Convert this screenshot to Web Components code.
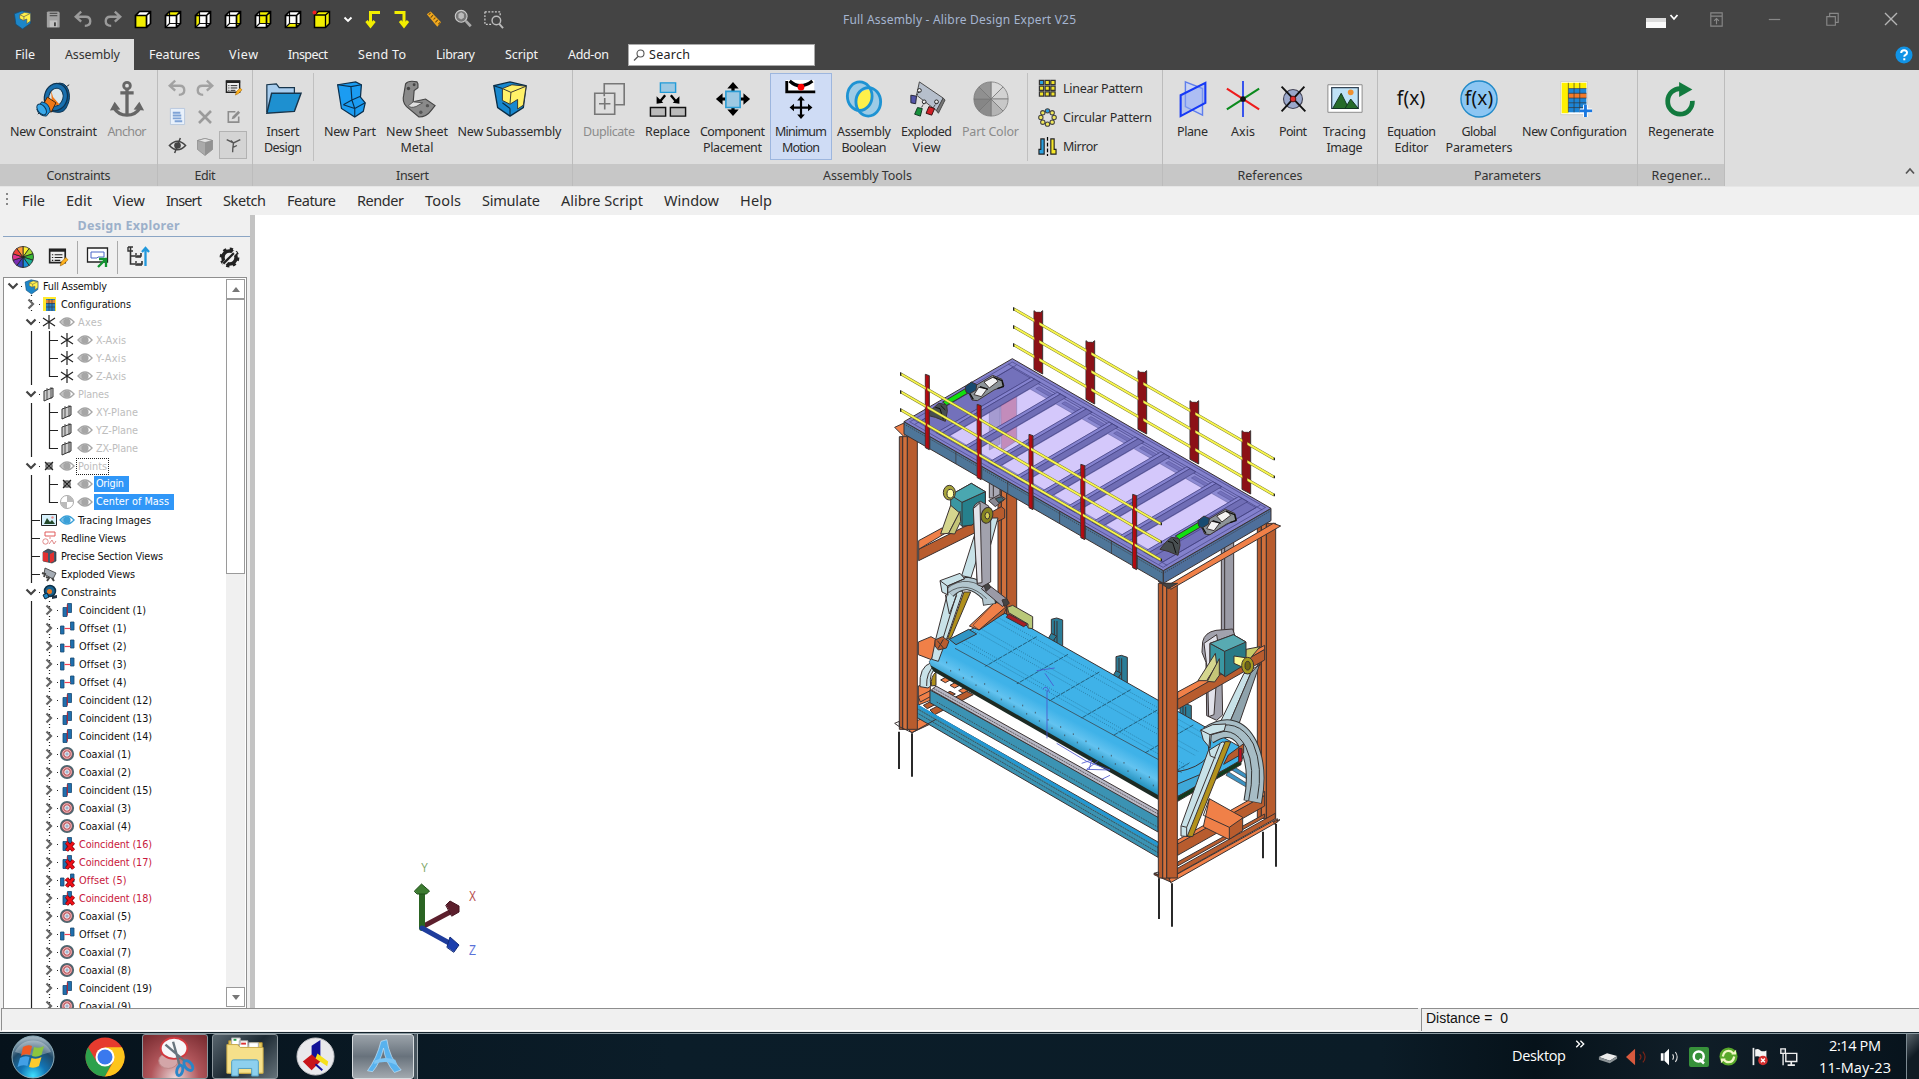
<!DOCTYPE html>
<html lang="en">
<head>
<meta charset="utf-8">
<title>Full Assembly - Alibre Design Expert V25</title>
<style>
html,body{margin:0;padding:0;width:1919px;height:1079px;overflow:hidden;background:#fff}
body{font-family:"Noto Sans","Open Sans",sans-serif;font-size:13px;color:#222}
</style>
</head>
<body>
<cad-app></cad-app>
<script>
const Y='#f2ee00';
const cube=f=>`<path d="M2.5 7.5l4-4h11v12l-4 4h-11z" fill="#fff"/>${f}<path d="M6.500 3.500v12h11M2.500 19.500l4-4" fill="none" stroke="#111" stroke-width="1.200"/><path d="M2.500 7.500h11v12h-11zM2.500 7.500l4-4h11v12l-4 4M13.500 7.500l4-4" fill="none" stroke="#000" stroke-width="1.700"/>`;
const solid=`<path d="M2.500 7.500l4-4h11v12l-4 4h-11z" fill="#fff"/><path d="M2.500 7.500h11v12h-11z" fill="${Y}"/><path d="M2.500 7.500h11v12h-11zM2.500 7.500l4-4h11v12l-4 4M13.500 7.500l4-4" fill="none" stroke="#000" stroke-width="1.700"/>`;
const eye=c=>`<path d="M2 9q7-8 14 0q-7 8-14 0z" fill="#fff" stroke="${c}" stroke-width="1.4"/><circle cx="9" cy="9" r="3.6" fill="${c}"/><path d="M2.5 9l4-3v6z" fill="${c}" opacity=".7"/>`;
const coin='<path d="M5 6.500h4v9h-4z" fill="#1f6fae" stroke="#174a72" stroke-width=".8"/><path d="M9.500 2.500h4v9h-4z" fill="#1f6fae" stroke="#174a72" stroke-width=".8"/><path d="M9.300 3.500v11" stroke="#c02030" stroke-width="1"/>';
const offs='<path d="M2.500 7h3.500v8h-3.500zM12.500 3h3.500v8h-3.500z" fill="#1f6fae" stroke="#174a72" stroke-width=".8"/><path d="M6.500 9.500h6" stroke="#f04050" stroke-width="1.200"/>';
const bad='<path d="M8.500 7.500l7 8M15.500 7.500l-7 8" stroke="#7a0008" stroke-width="4"/><path d="M8.500 7.500l7 8M15.500 7.500l-7 8" stroke="#f01018" stroke-width="2.600"/>';
const wheel=(cs,r,c,st)=>cs.map((k,i)=>{const n=cs.length,a=i*2*Math.PI/n-Math.PI/2,b=a+2*Math.PI/n;return `<path d="M${c} ${c}L${c+r*Math.cos(a)} ${c+r*Math.sin(a)}A${r} ${r} 0 0 1 ${c+r*Math.cos(b)} ${c+r*Math.sin(b)}z" fill="${k}" stroke="${st}" stroke-width=".8"/>`}).join('');
const logo='<path d="M1.500 4l8-3 9 2v11l-8.500 6l-7-5z" fill="#1d86c8" stroke="#124e78" stroke-width=".8"/><path d="M7 5l5-2.500 6.500 1v8l-4 3v-5l-3.500 1.500-4-2z" fill="#fff04a" stroke="#555" stroke-width=".7"/><path d="M7 5l4.500 2 7-3.500M11.500 7v4" stroke="#555" stroke-width=".7" fill="none"/>';
const undo='<path d="M9 3L3 8.500l6 5.500M4 8.500h10q5 0 5 5q0 5-6 5" fill="none" stroke="currentColor" stroke-width="2.600"/>';
const arrow4='<path d="M-13 0H13M0-13V13" stroke="#000" stroke-width="3.400"/><path d="M-18 0l7-6v12zM18 0l-7-6v12zM0-18l-6 7h12zM0 18l-6-7h12z"/>';
// name: [view box size, drawing]
const ICONS={
logo:[20,logo],
save:[20,'<path d="M4 1.500h11q1.500 0 1.500 2v14q0 1-1.500 1h-11q-1 0-1-1v-15z" fill="#a2a2a2"/><path d="M6 3.500h8M6 6h8" stroke="#555" stroke-width="1.300"/><path d="M6 11h8v7h-8z" fill="#c2c2c2"/><path d="M10.500 13h2v4h-2z" fill="#444"/>'],
undo:[22,undo],redo:[22,`<g transform="translate(22 0) scale(-1 1)">${undo}</g>`],
cfront:[20,solid],
ctop:[20,cube(`<path d="M2.500 7.500l4-4h11l-4 4z" fill="${Y}"/>`)],
cleft:[20,cube(`<path d="M2.500 7.500l4-4v12l-4 4z" fill="${Y}"/>`)],
cright:[20,cube(`<path d="M13.500 7.500l4-4v12l-4 4z" fill="${Y}"/>`)],
cback:[20,cube(`<path d="M6.500 3.500h11v12h-11z" fill="${Y}"/>`)],
cbottom:[20,cube(`<path d="M2.500 19.500l4-4h11l-4 4z" fill="${Y}"/>`)],
ciso:[20,`<path d="M2.500 7l4-3.500h11v12l-4 4h-11z" fill="${Y}" stroke="#000" stroke-width="1.500"/><path d="M2.500 7h11l4-3.500M13.500 7v12.500" fill="none" stroke="#000" stroke-width="1.300"/><circle cx="2.500" cy="4.500" r="2" fill="#f02020"/>`],
chev:[10,'<path d="M1.500 3.500l3.500 3.500 3.500-3.500" fill="none" stroke="currentColor" stroke-width="1.900"/>'],
yl:[20,`<path d="M17 3.500H7.500V15M3.500 12l4 5 4-5" fill="none" stroke="${Y}" stroke-width="3"/>`],
yr:[20,`<path d="M2.500 3.500H12V15M8 12l4 5 4-5" fill="none" stroke="${Y}" stroke-width="3"/>`],
ruler:[20,'<path d="M3 4.500l4-3L18 13l-4 4.500z" fill="#f2a91e"/><path d="M7 3l-2 2M9.500 5.500L7 8M12 8l-2 2M14.500 10.500L12 13M17 13l-2 2" stroke="#6b4a10" stroke-width="1.100"/>'],
mag:[22,'<circle cx="9" cy="8" r="6.500" fill="#777" stroke="#ccc" stroke-width="1.200"/><path d="M9 3.500l3 2v4l-3 2-3-2v-4z" fill="#bbb"/><path d="M14 13l5.500 6" stroke="#aaa" stroke-width="3"/>'],
region:[22,'<path d="M2 3h16v5M2 3v13h7" fill="none" stroke="#ccc" stroke-width="1.300" stroke-dasharray="2 1.500"/><circle cx="14" cy="12" r="4.500" fill="none" stroke="#bbb" stroke-width="1.500"/><path d="M17 15.500l4 4.500" stroke="#bbb" stroke-width="2"/>'],
constraint:[40,'<path d="M36 5l-6 4M3 36l3-3" stroke="#222"/><path d="M22 4q9-3 13 6 3 9-1 17-3 8-11 7l-6-1z" fill="#0d588f" stroke="#0e3350"/><ellipse cx="22" cy="18" rx="12" ry="14.500" fill="#186fae" stroke="#0e3350" stroke-width="1.300" transform="rotate(15 22 18)"/><ellipse cx="22" cy="18" rx="7.500" ry="9.500" fill="#d9e6ec" stroke="#0e3350" transform="rotate(15 22 18)"/><path d="M17 11l2 7 7 8-8 1z" fill="#f07818"/><path d="M13 18l9 6-5 10-9-7z" fill="#f07818" stroke="#44260a"/><path d="M7 23q8 1 9 10l-4 5q-8 0-10-7z" fill="#1c91dc" stroke="#0e3350"/><ellipse cx="7" cy="31" rx="4" ry="6.500" fill="#3aa9ea" stroke="#0e3350" transform="rotate(-38 7 31)"/>'],
anchor:[40,'<g fill="none" stroke="#666" stroke-width="3"><circle cx="20" cy="6" r="3.500"/><path d="M20 10v26M13 13.500h14" stroke-width="3.500"/><path d="M6 29q5 8 14 8t14-8" stroke-width="3.500"/></g><path d="M2 32l5-9 6 8zM38 32l-5-9-6 8z" fill="#666"/>'],
props:[18,'<path d="M1.500 2h14v12h-14z" fill="#eee" stroke="#222" stroke-width="1.500"/><path d="M1 3h15" stroke="#222" stroke-width="2.500"/><path d="M6 7h7M6 9.500h7M6 12h5M3.500 7h1.200M3.500 9.500h1.200M3.500 12h1.200" stroke="#222"/><path d="M11 17l1-3.500 4-4 2 2-4 4z" fill="#ffb21c" stroke="#a4690b" stroke-width=".6"/>'],
bluelist:[18,'<path d="M1.500 .5h15v17h-15z" fill="#e9f1fb" stroke="#b9c9de"/><path d="M4 5h8M4 8h9M4 11h9M6 14h8" stroke="#7fa3d6" stroke-width="2"/>'],
xx:[18,'<path d="M3 3l12 12M15 3L3 15" stroke="#9b9b9b" stroke-width="2.600"/>'],
editbox:[18,'<path d="M11 4H3.500v11h11V9" fill="none" stroke="#8d8d8d" stroke-width="1.700"/><path d="M7 12l1-3 6-6 2 2-6 6z" fill="#8d8d8d"/>'],
noeye:[20,'<path d="M1.500 10q8.500-9 17 0-8.500 9-17 0z" fill="none" stroke="#444" stroke-width="1.600"/><circle cx="10" cy="10" r="3.500" fill="#444"/><path d="M7 18L13 2" stroke="#444" stroke-width="1.600"/>'],
shade:[18,'<path d="M1.500 3.500l7.500-2 7.500 2v9l-7.500 6-7.500-6z" fill="#aaa" stroke="#888" stroke-width=".7"/><path d="M9 5.500l7.500-2v9l-7.500 6z" fill="#929292"/><path d="M1.500 3.500l7.500-2 7.500 2-7.500 2z" fill="#e6e6e6" stroke="#888" stroke-width=".7"/>'],
tri:[20,'<path d="M2 3l8 4 8-4M10 7q-1 6-1 11M7 4l3 3M10 12l4-2" fill="none" stroke="#555" stroke-width="1.600"/>'],
folder:[40,'<path d="M3 34V5l10-1 3 4h16v6" fill="#a8cdee" stroke="#17354c" stroke-width="1.300"/><path d="M3 35l5-21h31l-7 19z" fill="#1e90d0" stroke="#17354c" stroke-width="1.500"/>'],
part:[40,'<path d="M7 5L26 2l6 3-1 13 5 6-2 9-9 6-14-9z" fill="#1b9cf2" stroke="#0a2f4d" stroke-width="1.300"/><path d="M7 5l14 2 11-2M21 7l1 14-9 5M22 21l9-4M22 21l3 9v9M25 30l11-6M13 26l12 4" fill="none" stroke="#0a2f4d" stroke-width="1.200"/>'],
sheet:[40,'<path d="M8 4q3-4 12-2l1 2v4l-4 3-1 12 13-3 10 7-4 5q-5 7-13 7L9 28q-5-5-3-12z" fill="#8a8a8a" stroke="#444" stroke-width="1.200"/><path d="M11 27q2 3 8 1l7-4-10-1z" fill="#dedede" stroke="#555"/><circle cx="11" cy="9" r="1.800" fill="#444"/><circle cx="17" cy="5" r="1.500" fill="#444"/><circle cx="31" cy="27" r="1.800" fill="#555"/><circle cx="24" cy="34" r="1.800" fill="#555"/>'],
subasm:[40,'<path d="M3 6l17-4 17 4-3 23-14 9-13-9z" fill="#1788cf" stroke="#092c45" stroke-width="1.400"/><path d="M3 6l9 3M20 30v8M12 24l8 6" fill="none" stroke="#092c45" stroke-width="1.200"/><path d="M12 9l10-4 15 1.500-3 20-6 4v-10l-8 5-8-4z" fill="#fff168" stroke="#333"/><path d="M12 9l9 4 16-6.500M21 13l-1 12" stroke="#333" fill="none"/>'],
dup:[40,'<path d="M15 17V4h21v22H26" fill="none" stroke="#777" stroke-width="1.700"/><path d="M5 14h21v22H5zM15.500 19v12M9.500 25h12" fill="none" stroke="#777" stroke-width="1.700"/>'],
replace:[40,'<path d="M12 3h16v10H12z" fill="#9cc8e2" stroke="#219bd8" stroke-width="1.500"/><path d="M1.500 29h16v9h-16zM22.500 29h16v9h-16z" fill="#bbb" stroke="#111" stroke-width="1.500"/><path d="M17 16l-5 6M23 16l5 6" stroke="#000" stroke-width="2.500"/><path d="M8 25v-8l7 7zM32 25v-8l-7 7z"/>'],
place:[40,`<g transform="translate(20 20)">${arrow4}</g><path d="M12.500 12h15v17h-15z" fill="#9dc9e3" stroke="#2b9cd4" stroke-width="1.700"/>`],
motion:[40,`<path d="M4 0h30v14H4z" fill="#fff"/><path d="M5 1v11.500h30" fill="none" stroke="#000" stroke-width="3"/><path d="M8 1q11 10 24 0" fill="none" stroke="#000" stroke-width="3.500"/><circle cx="20" cy="7.500" r="3.500" fill="red"/><g transform="translate(20 29) scale(.67)">${arrow4}</g>`],
bool:[40,'<ellipse cx="15.500" cy="17" rx="13" ry="15" fill="#9dcbe6"/><ellipse cx="24.500" cy="23" rx="13" ry="15" fill="#9dcbe6"/><path d="M11 27Q11 10 27 10 32 22 24 31 16 33 11 27z" fill="#fff04a"/><ellipse cx="15.500" cy="17" rx="13" ry="15" fill="none" stroke="#1e93d3" stroke-width="3"/><ellipse cx="24.500" cy="23" rx="13" ry="15" fill="none" stroke="#1e93d3" stroke-width="3"/>'],
explode:[40,'<path d="M12 2l25 17-6 14-22-17z" fill="#b6bfcc" stroke="#444"/><path d="M37 19l2 2-7 14-2-3z" fill="#777" stroke="#444"/><g fill="#eee" stroke="#222"><circle cx="12" cy="11" r="2"/><circle cx="17" cy="23" r="2"/><circle cx="30" cy="23" r="2"/></g><path d="M12 12l-5 7M17 24l-5 9M30 24l-6 9" stroke="#222" stroke-dasharray="2 1"/><path d="M3 16l6 1-1 8-5-1z" fill="#5355a8" stroke="#223"/><path d="M10 29l5 1-2 8-6-2z" fill="#17913c" stroke="#132"/><path d="M22 28l6 2-3 7-6-2z" fill="#cf1f25" stroke="#311"/>'],
color:[40,wheel(['#dadada','#d2d2d2','#c8c8c8','#b4b4b4','#8c8c8c','#868686','#909090','#969696'],18,20,'#777')],
linear:[20,(()=>{let s='';for(let i=0;i<3;i++)for(let j=0;j<3;j++)s+=`<path d="M${1.5+i*6} ${1.500+j*6}h4.500v4.500h-4.500z" fill="${i+j?'#f0e22a':'#2aa0e0'}" stroke="#333" stroke-width="1.300"/>`;return s})()],
circular:[20,(()=>{let s='<circle cx="10" cy="10" r="6.500" fill="none" stroke="#444"/>';for(let i=0;i<8;i++){const a=i*Math.PI/4-Math.PI/2;s+=`<circle cx="${10+7*Math.cos(a)}" cy="${10+7*Math.sin(a)}" r="2.300" fill="${i?'#f0e75a':'#2aa0e0'}" stroke="#444" stroke-width="1.100"/>`}return s})()],
mirror:[20,'<path d="M6.500 2v16H1v-5h2V2z" fill="#2aa0e0" stroke="#222" stroke-width="1.200"/><path d="M13.500 2v16H19v-5h-2V2z" fill="#f5e62a" stroke="#222" stroke-width="1.200"/><path d="M10 0v20" stroke="#000" stroke-width="1.300" stroke-dasharray="4 2"/>'],
plane:[40,'<path d="M12 2l18 7v28L12 28z" fill="#c7d4f8" stroke="#4067f0" stroke-width="1.500" opacity=".8"/><path d="M7 16L33 3v21L7 38z" fill="#8fa8f4" fill-opacity=".5" stroke="#1639f5" stroke-width="2.200"/>'],
axis:[40,'<path d="M3 31L37 9" stroke="#0b8a1d" stroke-width="2.200"/><path d="M3 9l34 22" stroke="#ee1c1c" stroke-width="2.200"/><path d="M20 1v38" stroke="#1c3cf0" stroke-width="1.800"/><circle cx="20" cy="20" r="3" fill="#111"/>'],
point:[40,'<circle cx="20" cy="20" r="10" fill="#9aa8cc" stroke="#445" stroke-width="1.200"/><path d="M8 7l25 26M32 7L8 33" stroke="#111" stroke-width="2"/><circle cx="20" cy="20" r="3" fill="#e03030" stroke="#511"/>'],
image:[40,'<path d="M2 5h36v29H2z" fill="#fff" stroke="#888"/><path d="M6 8h28v22H6z" fill="#bfe2f7" stroke="#345" stroke-width="1.300"/><circle cx="26" cy="13" r="3" fill="#f09030"/><path d="M7 30l9-16 8 16z" fill="#256b2a" stroke="#132"/><path d="M20 30l6-10 8 10z" fill="#256b2a" stroke="#132"/>'],
fx:[40,'<text x="19" y="26" text-anchor="middle" font-family="Noto Sans" font-size="20" fill="#111" textLength="30">f(x)</text>'],
gfx:[40,'<circle cx="20" cy="20" r="19" fill="#8cc6f3" stroke="#218ac9" stroke-width="1.500"/><text x="20" y="26" text-anchor="middle" font-family="Noto Sans" font-size="20" fill="#111" textLength="30">f(x)</text>'],
config:[40,'<path d="M5 1.500h28v35H5z" fill="#fff" stroke="#ccc"/><path d="M6 3h26v6H6zM6 3h7v32H6z" fill="#fff000"/><path d="M13 9h19v25H13z" fill="#1c84d6"/><path d="M13 14h19v5H13z" fill="#f37a2b"/><path d="M13 9v25M19 3v31M25 3v31M13 3v6M13 9h19M13 14h19M13 19h19M13 24h19M13 29h19" stroke="#333" stroke-width=".7"/><path d="M31 26v13M25 32.500h13" stroke="#fff" stroke-width="5"/><path d="M31 26v13M25 32.500h13" stroke="#1a78e0" stroke-width="3"/>'],
regen:[40,'<path d="M20 9A13 13.500 0 1 0 32 22" fill="none" stroke="#127a3e" stroke-width="5"/><path d="M18 2l14 8-14 8z" fill="#127a3e"/>'],
wheel:[24,wheel(['#ffef30','#a4d830','#38b838','#1cae94','#1890d8','#3544ba','#7a2cb4','#e0348e','#f24238','#ff9d3c'],10.5,12,'#222')],
viewport:[24,'<path d="M1.500 3h20v14h-20z" fill="#fff" stroke="#222" stroke-width="1.300"/><path d="M5 7h13v5h-6l-1 1H5z" fill="none" stroke="#4b66c8"/><path d="M12 22l7-7M13 14h7v8" fill="none" stroke="#129430" stroke-width="2.300"/>'],
tree:[24,'<path d="M2 2h5M4.500 2v17h5M4.500 11h5M11 11h4v-3M11 19h5v-3" fill="none" stroke="#333" stroke-width="1.600"/><path d="M2 2v4h5M10 8v4h5M10 16v4h6" fill="none" stroke="#333" stroke-width="1.400"/><path d="M19.500 21V3M16 7l3.500-4 3.500 4" fill="none" stroke="#2198dc" stroke-width="2.300"/>'],
gear:[24,'<circle cx="12" cy="12" r="7.500" fill="none" stroke="#222" stroke-width="4"/><circle cx="12" cy="12" r="9.800" fill="none" stroke="#222" stroke-width="3" stroke-dasharray="3.700 4"/><path d="M5 20L19 5" stroke="#efefef" stroke-width="4.500"/><path d="M5 19L17 7" stroke="#222" stroke-width="2.500"/>'],
cfg:[18,'<path d="M3 2h13v14H3z" fill="#ffe92e"/><path d="M6 4h9v12H6z" fill="#2d7fc0"/><path d="M6 5h9v3H6z" fill="#e0873a"/><path d="M9 4v12M12 4v12M6 8.500h9M6 12h9" stroke="#333" stroke-width=".6"/>'],
ax:[18,'<path d="M9 2v14M3 5l12 8M15 5L3 13" stroke="#222" stroke-width="1.200"/>'],
pl:[18,'<path d="M4 6l9-3v9l-9 4z" fill="#ccc" stroke="#333"/><path d="M7 3v12M11 2v12" fill="none" stroke="#444" stroke-width=".9"/>'],
pt:[18,'<path d="M5 5h8v8H5z" fill="#b0b0b0"/><path d="M5 5l8 8M13 5l-8 8" stroke="#222" stroke-width="1.100"/><circle cx="9" cy="9" r="3" fill="none" stroke="#444" stroke-width=".8"/>'],
com:[18,'<circle cx="9" cy="9" r="6.500" fill="#fff" stroke="#aaa"/><path d="M9 2.500A6.500 6.500 0 0 1 15.500 9H9zM9 9v6.500A6.500 6.500 0 0 1 2.500 9z" fill="#bbb"/>'],
eye:[18,eye('#a6a6a6')],eyeb:[18,eye('#3aa0d8')],
img:[18,'<path d="M1.500 3.500h15v11h-15z" fill="#d7f1fc" stroke="#222"/><path d="M4 13l3-6 3 4 2-2 3 4z" fill="#23482a"/><circle cx="12.500" cy="6.500" r="1.200" fill="#e88"/>'],
red:[18,'<path d="M5 3h10v4H5z" fill="none" stroke="#e05a5a"/><circle cx="5.500" cy="12.500" r="2.700" fill="none" stroke="#e08a8a"/><path d="M9 15l3-4 2 4 2-3M10 8v2" fill="none" stroke="#e08a8a"/>'],
sec:[18,'<path d="M3 5l5-3 8 3v9l-4 2-9-2z" fill="#40586a" stroke="#222" stroke-width=".6"/><path d="M3 5l5 1v9l-5-1zM10 7l4-2v9l-4 2z" fill="#e03030"/>'],
exp:[18,'<path d="M5 3l11 5-3 6-9-5z" fill="#a5acb4" stroke="#333" stroke-width=".8"/><path d="M2 8l3 1-1 3M6 12l3 1-2 3M12 13l2 3" stroke="#444" stroke-width="2" fill="none"/>'],
con:[18,'<circle cx="10" cy="8" r="5.500" fill="#19628f" stroke="#0c3048" stroke-width="1.500"/><circle cx="9.500" cy="8.500" r="2.500" fill="#e87722"/><path d="M3 12l4-2 2 4-4 2z" fill="#2188c5" stroke="#123"/><path d="M12 13l5-1v3l-5 1z" fill="#234"/>'],
coin:[18,coin],offs:[18,offs],coinx:[18,coin+bad],offsx:[18,offs+bad],
coax:[18,'<circle cx="9" cy="9" r="6.200" fill="#c05c62" stroke="#4d6670" stroke-width="1.800"/><circle cx="9" cy="9" r="4.300" fill="none" stroke="#f0c8c8" stroke-width=".9"/><circle cx="9" cy="9" r="2.200" fill="#9fb2cc" stroke="#fff" stroke-width=".9"/>'],
down:[18,'<path d="M4.500 6.500L9 11l4.500-4.500" fill="none" stroke="#444" stroke-width="2.200"/>'],
right:[18,'<path d="M6.500 4.500L11 9l-4.500 4.500" fill="none" stroke="#666" stroke-width="2.200"/>'],
ribbonopt:[20,'<path d="M4 3h12v14H4zM4 6.500h12M10 15V9M7.500 11.500L10 9l2.500 2.500" fill="none" stroke="#888" stroke-width="1.200"/>'],
min:[20,'<path d="M4 10h12" stroke="#888" stroke-width="1.300"/>'],
max:[20,'<path d="M4 7h9v9H4zM7 7V3.500h9V13h-3" fill="none" stroke="#888" stroke-width="1.200"/>'],
close:[20,'<path d="M4 4l12 12M16 4L4 16" stroke="#b5b5b5" stroke-width="1.400"/>'],
skin:[30,'<path d="M0 14h20v10H0z" fill="#dcdcdc"/><path d="M0 18h20v6H0z" fill="#fafafa"/><path d="M24.500 11l3.500 4 3.500-4" fill="none" stroke="#fff" stroke-width="1.800"/>'],
help:[18,'<circle cx="9" cy="9" r="8.500" fill="#1193e6"/><path d="M6.200 7q0-2.700 2.900-2.700T12 6.800q0 1.500-1.800 2.300-.9.500-.9 1.700M9.300 12.300v2" fill="none" stroke="#fff" stroke-width="2"/>'],
up:[12,'<path d="M2 8.500L6 4l4 4.500" fill="none" stroke="#555" stroke-width="1.700"/>'],
search:[12,'<circle cx="7.500" cy="4.500" r="3.500" fill="none" stroke="#555" stroke-width="1.100"/><path d="M5 7.500L1 11.500" stroke="#555" stroke-width="1.300"/>'],
start:[44,'<defs><radialGradient id="o" cy=".95" r=".9"><stop offset="0" stop-color="#3fe0ff"/><stop offset=".35" stop-color="#1275b6"/><stop offset=".7" stop-color="#204a68"/><stop offset="1" stop-color="#9cb0bd"/></radialGradient></defs><circle cx="22" cy="22" r="21" fill="url(#o)" stroke="#8daebc"/><path d="M4 17a19 17 0 0 1 36 0q-18 7-36 0z" fill="#fff" opacity=".3"/><path d="M12 12q5-3 9-1l-2 9q-5-2-9 1z" fill="#ee5a24"/><path d="M23 12q5 2 10-1l-2.500 9q-5 3-9.500 1z" fill="#8cc63e"/><path d="M9 23q5-3 9.500-1l-2 9q-5-2-10 1z" fill="#42a0e6"/><path d="M20.500 23q5 2 10-1l-2.500 9q-5 3-10 1z" fill="#ffcb2e"/>'],
chrome:[40,'<circle cx="20" cy="20" r="19.500" fill="#e63b2e"/><path d="M3.100 10.300A19.500 19.500 0 0 0 20 39.500L28 24 20 20 11.500 24.500z" fill="#2da14c"/><path d="M20 39.500A19.500 19.500 0 0 0 37 10.300H20L28.500 24.500z" fill="#fdc51c"/><circle cx="20" cy="20" r="9.500" fill="#fff"/><circle cx="20" cy="20" r="7.500" fill="#3a79ee"/>'],
snip:[44,'<ellipse cx="15" cy="26" rx="10" ry="8" fill="#d3a6a8" stroke="#b88"/><ellipse cx="21" cy="13" rx="14" ry="11" fill="#f7f7f9" stroke="#d23a3f" stroke-width="2"/><path d="M12 9l20 17M20 6l7 25" stroke="#68757e" stroke-width="2.500"/><g fill="none" stroke="#2a86c8" stroke-width="3"><ellipse cx="27" cy="36" rx="3" ry="5.500" transform="rotate(15 27 36)"/><ellipse cx="36" cy="31" rx="3.500" ry="6" transform="rotate(-40 36 31)"/></g>'],
files:[44,'<path d="M5 5h9v5h14V7h12v32H5z" fill="#e9cb5c" stroke="#b08f30"/><path d="M8 2h9v7H8zM16 5h9v7h-9zM26 7h10v7H26z" fill="#fff" stroke="#aaa"/><path d="M10 4h3" stroke="#2aa050" stroke-width="2"/><path d="M18 8h5" stroke="#d33" stroke-width="2"/><path d="M3 9h11l3 3h24v27H3z" fill="#f6e08a" stroke="#c9a945"/><path d="M8 42V27q0-2 2-2h24q2 0 2 2v15h-7v-8H15v8z" fill="#8dd0ee" stroke="#4f9cc0"/>'],
sketch:[40,'<circle cx="20" cy="20" r="19" fill="#e9e9ec" stroke="#c4c4c8"/><path d="M16 9l9-6v17l-9 5z" fill="#111197"/><path d="M7 25l9-7 9 7-9 9z" fill="#c8141a"/><path d="M22 17l11 8-1 5-12-8z" fill="#f6e01c"/><path d="M20 28l7 6" stroke="#111197" stroke-width="2"/>'],
alibre:[44,'<path d="M3 39Q14 24 19 4l7-2q3 22 17 36l-8 3Q24 29 22 12 18 30 9 40z" fill="#58b2ee" stroke="#c8e6fa" stroke-width=".8"/><path d="M11 27q12-6 25-1l3 7q-13-8-28-2z" fill="#7dc6f5"/>'],
drive:[22,'<path d="M1 11l9-4 11 3-8 5z" fill="#ececec"/><path d="M1 11v3l12 4v-3zM13 15l8-5v3l-8 5z" fill="#8c9396"/>'],
spkr:[22,'<path d="M0 11L10 2v18z" fill="#d85a3e"/><path d="M15 8q3 3 0 6M18.500 5q5 6 0 12" stroke="#7d2417" fill="none" stroke-width="1.300"/>'],
spkw:[22,'<path d="M2 7h3v8H2zM6 7l5-5v18l-5-5z" fill="#fff"/><path d="M15 8q2 3 0 6M18 5.500q4 5.500 0 11" stroke="#ddd" fill="none" stroke-width="1.200"/>'],
q:[20,'<rect width="20" height="20" rx="2" fill="#37913a"/><circle cx="9.700" cy="9.500" r="5" fill="none" stroke="#fff" stroke-width="2.500"/><path d="M10.500 12l4.500 4.500" stroke="#fff" stroke-width="2.500"/>'],
sync:[20,'<circle cx="10" cy="10" r="9.500" fill="#58a82a"/><path d="M4 10q1-6 6-6 3 0 5 3M16 10q-1 6-6 6-3 0-5-3" stroke="#eff7c2" stroke-width="2.400" fill="none"/><path d="M13 8h5V3zM7 12H2v5z" fill="#eff7c2"/>'],
flag:[22,'<path d="M4 1v20" stroke="#eee" stroke-width="2"/><path d="M6 3q4-2 6 1 3 2 7 0v9q-4 1-7-1-2-2-6-1z" fill="#f4f4f4"/><circle cx="15" cy="15.500" r="5.500" fill="#d42f2f"/><path d="M12.800 13.300l4.400 4.400M17.200 13.300l-4.400 4.400" stroke="#fff" stroke-width="1.600"/>'],
net:[22,'<path d="M7.500 7h12v9h-12z" fill="#17212a" stroke="#eee" stroke-width="1.600"/><path d="M13.500 16v3M9.500 20h8" stroke="#eee" stroke-width="1.800"/><path d="M2 2h5v5H2zM4.500 7v13" fill="#26313a" stroke="#eee" stroke-width="1.500"/>'],
dbl:[12,'<path d="M1.500 2l4 4-4 4M6.500 2l4 4-4 4" fill="none" stroke="#fff" stroke-width="1.600"/>']
};
const def=(n,c)=>customElements.define(n,c);
class Base extends HTMLElement{
  constructor(){super();this.attachShadow({mode:'open'})}
  connectedCallback(){this.shadowRoot.innerHTML=this.render();this.after&&this.after()}
  a(n,d=''){return this.getAttribute(n)??d}
}
def('ui-icon',class extends Base{render(){
  const [v,d]=ICONS[this.a('name')],s=this.a('size',v);
  return `<style>:host{display:block;flex:none;width:${s}px;height:${s}px}svg{display:block;overflow:visible}</style><svg width="${s}" height="${s}" viewBox="0 0 ${v} ${v}">${d}</svg>`}});
// Label whose tracking is adjusted to occupy a given advance width.
def('fit-text',class extends Base{render(){
  return `<style>:host{display:block;flex:none;white-space:pre;width:${this.a('w')}px}span{display:inline-block}</style><span>${this.a('t')}</span>`}
  after(){const s=this.shadowRoot.querySelector('span'),w=+this.a('w'),t=this.a('t');
    if(w&&t.length>1)s.style.letterSpacing=(w-s.getBoundingClientRect().width)/(t.length-1)+'px'}});
def('title-bar',class extends Base{render(){
  const q=[['logo',19,22],['save',19,53],['undo',20,83],['redo',20,113],['cfront',20,143],['ctop',20,173],['cleft',20,203],['cright',20,233],['cback',20,263],['cbottom',20,293],['ciso',20,322],['chev',10,348],['yl',20,373],['yr',20,402],['ruler',19,433],['mag',20,463],['region',21,493]];
  let x=0,h='';for(const[n,s,c]of q){h+=`<ui-icon name="${n}" size="${s}" style="margin-left:${c-s/2-x}px;margin-top:${n[0]=='c'&&n!='chev'?-3:-1}px"></ui-icon>`;x=c+s/2}
  return `<style>:host{display:flex;height:39px;background:#444;color:#9b9b9b;align-items:center}
  .q{display:flex;align-items:center;width:843px}.t{color:#a5b5d0;font-size:12px;flex:1}.c{display:flex;align-items:center;gap:39px;padding-right:18px;margin-top:-1px}ui-icon[name=chev]{color:#fff}</style>
  <div class="q">${h}</div><div class="t"><fit-text w="233" t="Full Assembly - Alibre Design Expert V25"></fit-text></div>
  <div class="c"><ui-icon name="skin" size="30" style="margin-right:-8px"></ui-icon><ui-icon name="ribbonopt" size="19"></ui-icon><ui-icon name="min" size="19"></ui-icon><ui-icon name="max" size="19"></ui-icon><ui-icon name="close" size="20"></ui-icon></div>`}});
def('tab-strip',class extends Base{render(){
  const t=[['File',15,20],['Assembly',65,55],['Features',149,51],['View',229,29],['Inspect',288,40],['Send To',358,48],['Library',436,39],['Script',505,33],['Add-on',568,41]];
  let x=0,h='';for(const[n,l,w]of t){if(n=='Assembly'){h+=`<div class="on" style="margin-left:${50-x}px"><fit-text w="55" t="Assembly"></fit-text></div>`;x=134}else{h+=`<fit-text style="margin-left:${l-x}px" w="${w}" t="${n}"></fit-text>`;x=l+w}}
  return `<style>:host{display:flex;height:31px;background:#444;color:#f4f4f4;align-items:center;font-size:12.500px}
  .on{background:#dedede;color:#333;height:31px;width:69px;padding-left:15px;display:flex;align-items:center}
  .s{margin-left:19px;height:22px;background:#fff;border:1px solid #aaa;box-sizing:border-box;display:flex;align-items:center;gap:4px;padding-left:4px;color:#222;width:187px}
  .h{margin-left:auto;margin-right:6px}</style>${h}<div class="s"><ui-icon name="search" size="12"></ui-icon><fit-text w="41" t="Search"></fit-text></div><ui-icon class="h" name="help" size="18"></ui-icon>`}});
// l1/l2: caption lines, w1/w2: their widths
def('rib-button',class extends Base{render(){
  return `<style>:host{display:flex;flex-direction:column;align-items:center;box-sizing:border-box;flex:none;height:87px;width:${this.a('w')}px;padding-top:6px;line-height:16px;color:#2b2b2b;font-size:12.500px;border:1px solid transparent}
  :host([off]){color:#8b8b8b}:host([on]){background:#cfdcf5;border-color:#9db6de}ui-icon{margin-bottom:6px}</style>
  <ui-icon name="${this.a('icon')}" size="38"></ui-icon><fit-text w="${this.a('w1')}" t="${this.a('l1')}"></fit-text>${this.a('l2')?`<fit-text w="${this.a('w2')}" t="${this.a('l2')}"></fit-text>`:''}`}});
def('rib-group',class extends Base{render(){
  return `<style>:host{display:flex;flex-direction:column;box-sizing:border-box;flex:none;width:${this.a('w')}px;height:116px;border-right:1px solid #bcbcbc}
  .b{display:flex;height:94px;box-sizing:border-box;padding:3px 0 0 ${this.a('pad',5)}px}.l{height:22px;background:#c7c7c7;display:flex;align-items:center;justify-content:center;font-size:12.500px;color:#333}</style>
  <div class="b"><slot></slot></div><div class="l"><fit-text w="${this.a('lw')}" t="${this.a('label')}"></fit-text></div>`}});
def('rib-bar',class extends Base{render(){
  const b=(w,icon,l1,w1,l2='',w2=0,x='')=>`<rib-button ${x} w="${w}" icon="${icon}" l1="${l1}" w1="${w1}" l2="${l2}" w2="${w2}"></rib-button>`;
  const row=(i,t,w)=>`<div class="r"><ui-icon name="${i}" size="19"></ui-icon><fit-text w="${w}" t="${t}"></fit-text></div>`;
  return `<style>:host{display:flex;height:116px;background:#dedede;border-bottom:0}
  .g{display:grid;grid-template-columns:repeat(3,28px);grid-auto-rows:29px}.g div{display:flex;align-items:center;justify-content:center;color:#a2a2a2}.g .on{border:1px solid #b2b2b2;box-sizing:border-box;background:#d4d4d4;height:28px}
  .s{width:1px;height:88px;background:#c0c0c0;margin:0 4px 0 3px}.c{padding:1px 0 0 6px}.r{display:flex;align-items:center;height:29px;gap:6px;font-size:12.500px;color:#2b2b2b}
  .x{margin:95px 3px 0 auto}</style>
  <rib-group w="158" label="Constraints" lw="64">${b(97,'constraint','New Constraint',87)}${b(50,'anchor','Anchor',39,'',0,'off')}</rib-group>
  <rib-group w="95" label="Edit" lw="21"><div class="g"><div><ui-icon name="undo" size="20"></ui-icon></div><div><ui-icon name="redo" size="20"></ui-icon></div><div><ui-icon name="props" size="17"></ui-icon></div><div><ui-icon name="bluelist" size="17"></ui-icon></div><div><ui-icon name="xx" size="18"></ui-icon></div><div><ui-icon name="editbox" size="17"></ui-icon></div><div><ui-icon name="noeye" size="19"></ui-icon></div><div><ui-icon name="shade" size="18"></ui-icon></div><div class="on"><ui-icon name="tri" size="17"></ui-icon></div></div></rib-group>
  <rib-group w="320" label="Insert" lw="33" pad="3">${b(54,'folder','Insert',33,'Design',38)}<div class="s"></div>${b(64,'part','New Part',52)}${b(70,'sheet','New Sheet',62,'Metal',33)}${b(115,'subasm','New Subassembly',104)}</rib-group>
  <rib-group w="590" label="Assembly Tools" lw="89">${b(62,'dup','Duplicate',52,'',0,'off')}${b(55,'replace','Replace',45)}${b(75,'place','Component',65,'Placement',59)}${b(62,'motion','Minimum',52,'Motion',38,'on')}${b(64,'bool','Assembly',54,'Boolean',45)}${b(61,'explode','Exploded',51,'View',28)}${b(67,'color','Part Color',57,'',0,'off')}<div class="s"></div><div class="c">${row('linear','Linear Pattern',80)}${row('circular','Circular Pattern',89)}${row('mirror','Mirror',35)}</div></rib-group>
  <rib-group w="215" label="References" lw="65">${b(49,'plane','Plane',31)}${b(52,'axis','Axis',24)}${b(48,'point','Point',28)}${b(55,'image','Tracing',43,'Image',36)}</rib-group>
  <rib-group w="260" label="Parameters" lw="67" pad="3">${b(61,'fx','Equation',49,'Editor',34)}${b(74,'gfx','Global',35,'Parameters',67)}${b(117,'config','New Configuration',105)}</rib-group>
  <rib-group w="87" label="Regener..." lw="59">${b(76,'regen','Regenerate',66)}</rib-group>
  <ui-icon class="x" name="up" size="12"></ui-icon>`}});
def('menu-bar',class extends Base{render(){
  const m=[['File',22,23],['Edit',66,26],['View',113,32],['Insert',166,36],['Sketch',223,43],['Feature',287,49],['Render',357,47],['Tools',425,36],['Simulate',482,58],['Alibre Script',561,82],['Window',664,55],['Help',740,32]];
  let x=8,h='';for(const[n,l,w]of m){h+=`<fit-text style="margin-left:${l-x}px" w="${w}" t="${n}"></fit-text>`;x=l+w}
  return `<style>:host{display:flex;height:29px;background:#f0f0f0;align-items:center;font-size:14.500px;color:#2c2c2c;box-sizing:border-box;border-top:1px solid #e6e6e6;padding-bottom:2px}i{width:2px;height:14px;margin-left:6px;background:repeating-linear-gradient(#888 0 2px,transparent 2px 5px)}</style><i></i>${h}`}});
const ROWS=[[0,'logo','Full Assembly',64,'v'],[1,'cfg','Configurations',70,'>'],[1,'ax','Axes',24,'v','e'],[2,'ax','X-Axis',30,'','e'],[2,'ax','Y-Axis',30,'','e'],[2,'ax','Z-Axis',30,'L','e'],[1,'pl','Planes',31,'v','e'],[2,'pl','XY-Plane',42,'','e'],[2,'pl','YZ-Plane',42,'','e'],[2,'pl','ZX-Plane',42,'L','e'],[1,'pt','Points',29,'v','f'],[2,'pt','Origin',28,'','s'],[2,'com','Center of Mass',73,'L','s'],[1,'img','Tracing Images',73,'','b'],[1,'red','Redline Views',65,''],[1,'sec','Precise Section Views',102,''],[1,'exp','Exploded Views',74,''],[1,'con','Constraints',55,'v']];
for(const c of 'C1 O1 O2 O3 O4 C12 C13 C14 X1 X2 C15 X3 X4 c16 c17 o5 c18 X5 O7 X7 X8 C19 X9'.split(' ')){const k=c[0],K=k.toUpperCase(),n=c.slice(1),nm={C:'Coincident',O:'Offset',X:'Coaxial'}[K];
  ROWS.push([2,{C:'coin',O:'offs',X:'coax'}[K]+(k==K?'':'x'),`${nm} (${n})`,({C:67,O:47.5,X:52}[K])+(n.length>1?6:0),'>',k==K?'':'r'])}
def('tree-row',class extends Base{render(){
  const [l,ic,t,w,k,f='']=ROWS[+this.a('i')],i=+this.a('i');let h='';
  const cell=d=>`<svg width="18" height="18"><g fill="none" stroke="#222" stroke-width="1.200">${d}</g></svg>`;
  const dot='<path d="M9.500 0v18" stroke-dasharray="1 4"/>';
  if(l>0)h+=cell('');
  if(l==2)h+=cell('<path d="M9.500 0v18"/>');
  if(k=='v'||k=='>')h+=`<span class="k">${cell((l==2||i==1?dot:'')+'<path d="M17 9.500h1"/>')}<ui-icon name="${k=='v'?'down':'right'}" size="18"></ui-icon></span>`;
  else h+=cell(k=='L'?'<path d="M9.500 0v9.500h9"/>':'<path d="M9.500 0v18M9.500 9.500h9"/>');
  h+=`<ui-icon name="${ic}" size="${ic=='logo'?15:18}" style="margin:${ic=='logo'?1.5:0}px"></ui-icon>`;
  if(f&&f!='r')h+=`<ui-icon name="${f=='b'?'eyeb':'eye'}" size="18"></ui-icon>`;
  return `<style>:host{display:flex;height:18px;align-items:center;font-family:"DejaVu Sans Condensed","Noto Sans",sans-serif;font-size:10.800px;line-height:15px;color:${f=='r'?'#c8183c':f=='e'||f=='f'?'#bdbdbd':f=='s'?'#fff':'#111'}}svg{display:block;flex:none}.k{display:grid}.k>*{grid-area:1/1}
  .t{padding:0 1px;border:1px ${f=='f'?'dotted #222':'solid transparent'};margin-left:${f&&f!='r'?0:1}px}.s{background:#3097f8;padding:0 5px 0 2px;border:0;height:16px;line-height:16px}</style>${h}<div class="t ${f}"><fit-text w="${w}" t="${t}"></fit-text></div>`}});
def('design-explorer',class extends Base{render(){
  return `<style>:host{display:flex;flex-direction:column;width:250px;height:793px;background:#f0f0f0;border-right:5px solid #c3c3c3;box-sizing:content-box;overflow:hidden}
  .h{height:22px;display:flex;justify-content:center;align-items:center;font-weight:bold;font-size:12.500px;color:#9cb0ca;border-bottom:1px solid #8ba5c4;margin-left:3px;width:247px;box-sizing:border-box;padding-left:4px}
  .b{height:40px;display:flex;align-items:center;padding-left:11px;box-sizing:border-box}.b i{width:1px;height:33px;background:#aaa}
  .x{flex:1;min-height:0;margin:0 3px;border:1px solid #8f8f8f;border-bottom:0;background:#fff;display:flex;width:242px;box-sizing:content-box}
  .t{flex:1;overflow:hidden}.t section{margin-top:-1px}.s{width:19px;background:#f0f0f0;margin:1px;display:flex;flex-direction:column;justify-content:space-between}
  .s div{border:1px solid #9a9a9a;background:#fff;box-sizing:border-box;height:20px;display:flex;align-items:center;justify-content:center}.s .th{height:275px}
  em{border:4px solid transparent;border-bottom:5px solid #777;border-top:0}em.d{border-bottom:0;border-top:5px solid #777}</style>
  <div class="h"><fit-text w="102" t="Design Explorer"></fit-text></div>
  <div class="b"><ui-icon name="wheel" size="24"></ui-icon><ui-icon name="props" size="20" style="margin-left:13px"></ui-icon><i style="margin-left:9px"></i><ui-icon name="viewport" size="24" style="margin-left:8px"></ui-icon><i style="margin-left:7px"></i><ui-icon name="tree" size="24" style="margin-left:8px"></ui-icon><ui-icon name="gear" size="21" style="margin-left:69px"></ui-icon></div>
  <div class="x"><div class="t"><section>${ROWS.map((r,i)=>`<tree-row i="${i}"></tree-row>`).join('')}</section></div><div class="s"><section><div><em></em></div><div class="th"></div></section><div><em class="d"></em></div></div></div>`}});
// Isometric assembly. Local units are thirds of a pixel.
function assembly(){
  const P=(d,f,x='')=>`<path d="${d}" fill="${f}" ${x}/>`;
  const O='#b85c2e',OL='#f08048',TB='#3b93b3',LB='#c8e2e8';
  let s='';
  const post=(x,y,w,y2,c)=>P(`M${x} ${y}h${w}v${y2-y}h${-w}z`,O)+P(`M${x+c[0]} ${y}h${c[1]-c[0]}v${y2-y}h${c[0]-c[1]}z`,'#d0703c','stroke-width="2"')+c.map(k=>P(`M${x+k} ${y}V${y2}`,'none')).join('');
  // rear posts
  s+=post(354,560,56,985,[10,26])+P('M328 560h32v64h-32zM340 560v60','#a8a8b4');
  s+=post(1132,700,55,1585,[12,27])+P('M1024 750h37v300h-37zM1034 750v290','#9b9ba6');
  s+='<g transform="translate(0 870)">';
  s+=P('M115 186l38-16 14 8v66l-52-20z',OL)+P('M115 318l36-12v55l-36 14z',OL)+P('M115 350l36-18v18l-30 16zM182 300l22-12 14 8-22 12zM210 316l26-14 14 8-26 14zM236 332l26-14 14 8-26 14z',OL)+P('M130 376l80-42 16 8-84 44zM150 390l110-56 20 10-116 60z',O)+P('M76 440l60-30 36 12-76 36z',OL);
  // lower right frame
  s+=P('M893 790L1154 646v32L893 826z',O)+P('M893 780L1154 634v12L893 792z',OL)+P('M893 846L1154 702v10L893 858z',O)+P('M880 872l306-172v16L880 888z',O)+P('M864 898L1192 716v10L872 908z',OL)+P('M822 880l42 10 8 16-50-22z',O);
  s+=P('M1045 575l55 35v12l-62-36zM1065 562l35 22v12l-45-26z','#3b93c3','stroke-width="2"');
  // curved foot, left
  s+=P('M120 320q-4-60 34-72l16 14q-24 16-18 56l-8 6z',LB)+P('M140 318q-2-40 24-62','none')+P('M154 318q-2-30 14-42v40z','#b0901c');
  // lower beams
  s+=P('M150 330L834 708v48L150 368z',TB)+P('M168 318L834 692v20L154 330z','#b9b9c6')+P('M160 325L834 702','none','stroke-dasharray="6 2" stroke-width="2"')+P('M170 366L834 742','none','stroke-dasharray="5 3" stroke-width="2"');
  s+=P('M86 360L834 786v46L86 398z',TB)+P('M96 368L834 794','none','stroke="#2298d4" stroke-width="8"')+P('M90 374L834 803M110 398L834 818','none','stroke-dasharray="6 2" stroke-width="2"');
  // uprights behind the bed
  for(const[x,y]of[[514,118],[708,230],[900,375]])s+=P(`M${x} ${y}l16-4 18 6v78h-34z`,'#2b7d98')+P(`M${x+17} ${y+5}v70M${x+9} ${y+4}v60`,'none')+P(`M${x} ${y+42}l-20 34 14 4 22-30z`,'#2b7d98');
  // bed
  s+='<clipPath id="top"><path d="M375 100L960 432 1000 460 905 577 190 192z"/></clipPath>';
  s+=P('M205 180L375 100 960 432 1100 512 1080 548 990 590 898 656 834 655 160 268 148 245 180 200z','#3fb2e8');
  s+='<path d="M190 202L905 584 880 664 834 655 160 272 148 245z" fill="url(#bed)" stroke="none"/>';
  s+=P('M150 255L834 645v14L160 274z','#1d2b24','stroke="none"')+P('M893 612l90-38v30l-92 46z','#3fa8d8')+P('M893 650l190-110v14L893 664z','#12391c');
  s+='<g clip-path="url(#top)">';
  for(let i=0;i<7;i++){const x=470+i*94,y=170+i*53;s+=P(`M${x} ${y}L${x-180} ${y+104}`,'none','stroke="#1d4f68" stroke-width="2.500" stroke-dasharray="14 3"')}
  for(const t of[.13,.22,.47,.56,.8,.87]){const x=375-170*t,y=100+90*t;s+=P(`M${x} ${y}L${x+800} ${y+452}`,'none','stroke="#1d5a78" stroke-dasharray="3 4" stroke-width="1.600"')}
  s+='</g>'+P('M225 205L905 577M160 240L190 202','none','stroke-width="2"');
  for(let i=0;i<17;i++)s+=P(`M${200+i*38} ${245+i*21.500}v5M${212+i*38} ${270+i*21.500}v5`,'none','stroke-width="2"');
  s+=P('M893 575q60-10 90-44','none');
  s+=P('M385 102l58 30-12 8-52-28z','#a81f25')+P('M382 82l16-6 60 34v36l-14-2v-12l-58-34z','#b9c878')+P('M208 178l58-30 24 14-62 32z','#3095c4')+P('M381 78l-8 22-75 50 6-34z',O)+P('M268 138L345 66l36 12-84 72z',OL)+P('M345 66l-66 70 18 14','none','stroke-width="2"');
  s+='<g fill="none" stroke="#4b56cf" stroke-width="2.500"><path d="M501 475V330M488 328q12-16 20 8M470 272l54-8M495 280l26 38M530 490l90 54 70 26-70-2 35-26M605 550l30-10-8 30M665 598l25-12"/></g>';
  s+='</g>';
  // left drive: cross beam, gearbox, swing arm, lever
  s+=P('M116 778L274 700l90-50 10 8v26L116 812z',O)+P('M116 752l70-38 26 6-96 58z',OL)+P('M354 684h-30v60l8 20z',LB)+P('M283 737l-38 120 28 6 22-70z',LB);
  s+=P('M212 615l62-35 42 25v66l-40 34-30 4-34-34z','#3a97a2')+P('M246 637l70-32v66l-40 34-30 4z','#26808c')+P('M212 615l34 22 70-32-42-25z','#4aa7b0')+P('M212 646l-30 86 24-2 32-62z','#d5d68e')+P('M240 664l-34 66 18 2 18-38z','#c4c578');
  s+='<g transform="translate(0 870)">'+P('M252 36h20L214 172l-12 6z','#b0901c')+P('M205 30l44 4-46 134-28 76-20-6 12-60z',LB)+P('M232 34L190 172','none')+P('M165 180l22-10 20 14-8 20-24 6-10-12z',O)+P('M172 182l18 22M190 178l-16 28','none')+'</g>';
  s+='<path d="M206 906Q262 850 325 918l4 26" fill="none" stroke="#333" stroke-width="40"/><path d="M206 906Q262 850 325 918l3 24" fill="none" stroke="#b2c6cf" stroke-width="34"/><path d="M200 896Q262 846 335 910M205 908Q260 868 320 926" fill="none" stroke="#333" stroke-width="2"/>';
  s+=P('M180 872l60-22 14 16-50 22-2 26-16-8z',LB)+P('M180 872l22 16 2 28M202 888l52-22M196 914l12 58 22-56','none');
  s+=P('M304 896l16-16 62 48-14 22z','#9a9aa6')+P('M312 886l12-8 8 14-14 12zM366 930l14-4 8 14-14 10z','#444');
  s+=P('M280 656q2-16 22-22l24 14 6 40v188l-26 14-14-6z','#a2a2ad')+P('M280 656l20-18 6 240-14 2-8-130z','#e4e4ea');
  s+='<ellipse cx="208" cy="608" rx="18" ry="22" fill="#a8a53a"/><ellipse cx="211" cy="611" rx="10" ry="13" fill="#ffffa8"/>'+P('M326 632l32-18 18 12-30 24z','#8a8a94')+P('M346 626l18-6 8 10-16 8z','#3c6a78')+'<ellipse cx="321" cy="676" rx="17" ry="24" fill="#858420" transform="rotate(15 321 676)"/><ellipse cx="322" cy="677" rx="7" ry="10" fill="#d4cf55"/>';
  // right drive
  s+='<g transform="translate(0 870)">';
  s+=P('M968 185q6-28 40-34l50-4 6 18-40 40 4 200-18 16-30-14-2-160-12-30z','#a2a2ad')+P('M972 190l38-26 6 40-14 200-16 6-4-140z','#e2e2ea')+P('M893 350L1154 208v32L893 388z',O)+P('M893 336L1154 196v12L893 358z',OL)+P('M1024 420l68-140 20 0-64 150z',LB)+P('M1112 280l28-30-66 190-26-10z','#8fa3ac')+P('M1092 280l50-26','none');
  s+='<path d="M985 466Q1065 415 1105 495 1138 565 1118 666" fill="none" stroke="#333" stroke-width="56"/><path d="M985 466Q1065 415 1105 495 1138 565 1118.500 664" fill="none" stroke="#a7bdc6" stroke-width="50"/><path d="M990 466Q1060 430 1098 502 1128 562 1106 662M985 450Q1073 405 1120 492 1150 562 1132 656" fill="none" stroke="#333" stroke-width="3"/>';
  s+=P('M962 450l36-16 40-2-6 22-38 10-4 40-20-24z',LB)+P('M962 450l28 14 42-12M990 464l-4 50','none')+P('M985 512l42-26 18 2-116 282-26-2v-30z',LB)+P('M1036 484l16 2-114 284-16-2 14-34z','#b3921c')+P('M1020 492L920 742l-16-4M920 742v28','none')+P('M985 500l6 28 16 6','none');
  s+=P('M1045 525l46-34v28l-60 34z',O)+P('M1076 506h10v38l-10 4z','#c01020')+P('M988 656l100 56-42 66-76-38z',OL)+P('M1048 742l40-28v38l-40 26z',O)+P('M988 656l-18 50 78 36','none');
  s+=P('M1098 208l42-8-30 36-14 8z','#c9ca68')+P('M990 190l70-26 38 22v66l-62 38-46-32z','#297a86')+P('M990 190l44 24v74l-44-30z','#3a97a2')+P('M990 190l44 24 64-28-38-22z','#58aab2')+P('M1006 220l-52 82 26 0 30-48z','#d5d68e')+P('M1018 236l-36 68 22 2 14-20z','#c4c578')+P('M1062 228l40 6v34l-40-18z','#fafa96');
  s+='<ellipse cx="1103" cy="257" rx="18" ry="25" fill="#a49b1f"/><ellipse cx="1103" cy="257" rx="8" ry="13" fill="#6f6712"/></g>';
  // front posts
  s+=post(58,440,54,1318,[10,24])+post(835,880,57,1764,[13,25]);
  s+='<g stroke="#000" stroke-width="5">'+P('M57 1325v112M96 1330v130M837 1765v122M876 1780v130M1149 1625v80M1188 1602v128','none')+'</g>';
  s+=P('M44 1300l14-6v16zM58 1310l38 18 72-40M822 1750l14-4v10z','none')+P('M1180 1595l20-6-16 14z',O);
  s+=P('M44 412l26-12 20 20-18 20z',OL)+P('M864 886L1180 700l22 8L872 898z',OL)+P('M835 874l18 6 40 0-28 16z','#444');
  // deck
  s+=P('M72 395L850 842v38L72 432z','#4e7699')+P('M850 842l323-187v37L850 880z','#4e6f9b')+P('M72 395L397 206l776 449-323 187z','#8381cc');
  const pt=(u,v)=>[72+u*778+v*324,395+u*447-v*189];
  const poly=a=>'M'+a.map(([u,v])=>pt(u,v).map(n=>n.toFixed(1)).join(' ')).join('L');
  const line=(a,b)=>P(poly([a,b]),'none');
  s+='<g stroke="#3d3b78" stroke-width="1.800">';
  s+=P(poly([[.03,.07],[.03,.93],[.1,.93],[.1,.07]])+'z','#7371bb')+P(poly([[.93,.07],[.93,.93],[.97,.93],[.97,.07]])+'z','#7371bb');
  for(let k=1;k<9;k++){const a=.1*k+.036,b=.1*k+.1;
    s+=P(poly([[a-.006,.07],[a-.006,.92],[b,.92],[b,.07]])+'z','#8c8ad2')+P(poly([[a,.1],[a,.84],[b,.84],[b,.1]])+'z','#d4c8fb','stroke-width="1"')+P(poly([[a+.01,.87],[a+.01,.9],[b,.9],[b,.87]])+'z','#7472bd','stroke-width="1"')}
  s+=P('M362 330l48-28v150l-46 30z','#b4517d','opacity=".5"')+P('M328 350l32-18v130l-32 18z','#7870a8','opacity=".5"');
  for(let k=1;k<=9;k++){const a=.1*k;s+=P(poly([[a,.06],[a,.94],[a+.012,.94],[a+.012,.06]])+'z','#8583cf')+P(poly([[a+.012,.06],[a+.012,.94],[a+.034,.94],[a+.034,.06]])+'z','#706eb6')}
  for(const v of[.025,.06,.94,.975])s+=line([0.01,v],[.99,v]);
  for(const u of[.012,.03,.97,.988])s+=line([u,.03],[u,.97]);
  s+='</g>';
  for(let k=1;k<10;k++){const[x,y]=pt(k/10,0);s+=P(`M${x} ${y}v37`,'none','stroke-width="2"')}
  s+=P('M72 402L850 850 1173 662','none','stroke-dasharray="4 3" stroke-width="2"');
  // hydraulic cylinders
  for(const[x,y]of[[0,0],[698,402]])s+=`<g transform="translate(${x} ${y})">`+P('M158 356l18-16 24 4 2 20-6 30-30-12-24-6z','#474e50')+P('M166 352l14 4 10 32M182 346l14 14','none','stroke="#111"')+P('M268 312l20-26 50-30 28 12 6 20-30 12-50 32-16-2z','#8d9498')+P('M282 314l14-22 26 4-18 24zM312 276l30-16 12 14-26 20z','#f3f3f3')+P('M340 262l26 10 4 18-18 6M264 302l16 26M300 290l24 8','none','stroke="#111" stroke-width="4"')+P('M188 336l68-40 6 14-62 36z','#10e010')+P('M256 290l18-14 16 8-2 16-20 12-10-6z','#174a70')+'</g>';
  // rails
  const rails=(x,y)=>[0,54,108].map(d=>`<path d="M${x} ${y+d}L${x+780} ${y+d+450}" stroke="#77772a" stroke-width="8"/><path d="M${x} ${y+d}L${x+780} ${y+d+450}" stroke="#f8f650" stroke-width="5.500"/><path d="M${x-1} ${y+d-5}v10M${x+781} ${y+d+446}v8" stroke="#222" stroke-width="4"/>`).join('');
  for(let i=0;i<5;i++)s+=P(`M${462+156*i} ${62+90*i}l6 5h14l6-5v190l-26-14z`,'#8c1117');
  s+=rails(402,57);
  for(let i=0;i<5;i++)s+=P(`M${463+156*i} ${67+90*i}h15v168h-15z`,'#8c1117','stroke="none"');
  for(let i=0;i<5;i++)s+=P(`M${136+155.5*i} ${253+90*i}l12 4v222l-12-6z`,'#a80c12');
  s+=rails(63,252);
  for(let i=0;i<5;i++)s+=P(`M${137+155.5*i} ${257+90*i}h5v214h-5z`,'#b80c12','stroke="none"');
  return s;
}
def('model-view',class extends Base{render(){
  return `<style>:host{display:block;flex:1;height:793px;background:#fff;overflow:hidden}svg{display:block}</style>
  <svg width="1664" height="793" viewBox="255 215 1664 793"><defs><linearGradient id="bed" gradientUnits="userSpaceOnUse" x1="500" y1="380" x2="465" y2="445"><stop offset="0" stop-color="#3fb2e8"/><stop offset=".5" stop-color="#63c3f0"/><stop offset="1" stop-color="#2592bf"/></linearGradient></defs>
  <g transform="translate(880 290) scale(.33333)" stroke="#3a3232" stroke-width="3">${assembly()}</g>
  <g font-family="Liberation Sans" font-size="14"><text x="421" y="872" fill="#7fa86a" textLength="7" lengthAdjust="spacingAndGlyphs" font-size="12">Y</text><text x="469" y="901" fill="#b64c4c" textLength="7" lengthAdjust="spacingAndGlyphs">X</text><text x="469" y="955" fill="#5a72d8" textLength="7" lengthAdjust="spacingAndGlyphs">Z</text></g>
  <g stroke-linecap="round"><path d="M422 927l30-16" stroke="#5c1f2d" stroke-width="5"/><path d="M446 905l4-4 9 5v6l-7 4z" fill="#5c1f2d" stroke="#451420"/><path d="M422 928V893" stroke="#2b6423" stroke-width="6"/><path d="M414.500 891l7-7 8 7-3 3h-9z" fill="#3d7c31" stroke="#1f4f18"/><path d="M422 928l29 16" stroke="#1e3c9c" stroke-width="5"/><path d="M447 947l3-10 9 8-5 7z" fill="#1c3fae" stroke="#122b78"/></g></svg>`}});
def('status-bar',class extends Base{render(){
  return `<style>:host{display:flex;height:25px;background:#f0f0f0;gap:3px;padding-left:1px;box-sizing:border-box;font-family:"Liberation Sans",sans-serif;font-size:14px;color:#111}
  div{border-top:1px solid #8e8e8e;border-left:1px solid #8e8e8e;box-sizing:border-box;height:23px}.l{width:1417px;border-bottom:1px solid #fff}.r{flex:1;padding:1px 0 0 4px}</style><div class="l"></div><div class="r"><fit-text w="82" t="Distance =  0"></fit-text></div>`}});
def('task-bar',class extends Base{render(){
  return `<style>:host{display:flex;height:46px;box-sizing:border-box;border-top:1px solid #8d9ca3;box-shadow:0 -1px #15232c;background:linear-gradient(90deg,#06121b,#0b1d29 35%,#0b1c27 72%,#06121a 80%,#101e28 88%,#07131c);align-items:center;color:#fff;font-family:"Open Sans","Noto Sans",sans-serif;font-size:14.500px}
  .b{height:45px;box-sizing:border-box;border:1px solid #8b959b;border-radius:3px;display:flex;align-items:center;justify-content:center;width:66px}
  .s{background:radial-gradient(circle at 50% 100%,#ead6d7,#b1565b 45%,#74282d);margin-left:17px}.f{background:linear-gradient(135deg,#58656e,#1d2a33 50%,#65727a);margin-left:4px}.a{background:linear-gradient(#9ba3aa,#68727c 50%,#a2a9af);border-color:#d7dcdf;width:62px;margin-left:17px}.e{width:4px;height:45px;border-right:1px solid #a5afb5;box-sizing:border-box;background:#47545d}
  .c{display:flex;flex-direction:column;align-items:center;line-height:22px;margin-left:20px}.d{width:13px;height:45px;border-left:1px solid #7d8a92;background:linear-gradient(135deg,#5a646b,#111c24 50%);box-sizing:border-box;margin-left:auto}</style>
  <ui-icon name="start" size="44" style="margin-left:11px"></ui-icon><ui-icon name="chrome" size="40" style="margin-left:30px"></ui-icon>
  <div class="b s"><ui-icon name="snip" size="42"></ui-icon></div><div class="b f"><ui-icon name="files" size="42"></ui-icon></div>
  <ui-icon name="sketch" size="39" style="margin-left:18px"></ui-icon><div class="b a"><ui-icon name="alibre" size="37"></ui-icon></div><div class="e"></div>
  <fit-text style="margin:-2px 0 0 1094px" w="54" t="Desktop"></fit-text><ui-icon name="dbl" size="10" style="margin:-26px 0 0 9px"></ui-icon>
  <ui-icon name="drive" size="20" style="margin-left:13px"></ui-icon><ui-icon name="spkr" size="20" style="margin-left:8px"></ui-icon><ui-icon name="spkw" size="20" style="margin-left:13px"></ui-icon><ui-icon name="q" size="20" style="margin-left:10px"></ui-icon><ui-icon name="sync" size="19" style="margin-left:10px"></ui-icon><ui-icon name="flag" size="19" style="margin-left:12px"></ui-icon><ui-icon name="net" size="20" style="margin-left:10px"></ui-icon>
  <div class="c"><fit-text w="52" t="2:14 PM"></fit-text><fit-text w="72" t="11-May-23"></fit-text></div><div class="d"></div>`}});
def('cad-app',class extends Base{render(){
  return `<style>:host{display:flex;flex-direction:column;width:1919px;height:1079px;overflow:hidden}.m{display:flex;height:793px}</style>
  <title-bar></title-bar><tab-strip></tab-strip><rib-bar></rib-bar><menu-bar></menu-bar><div class="m"><design-explorer></design-explorer><model-view></model-view></div><status-bar></status-bar><task-bar></task-bar>`}});
</script>
</body>
</html>
